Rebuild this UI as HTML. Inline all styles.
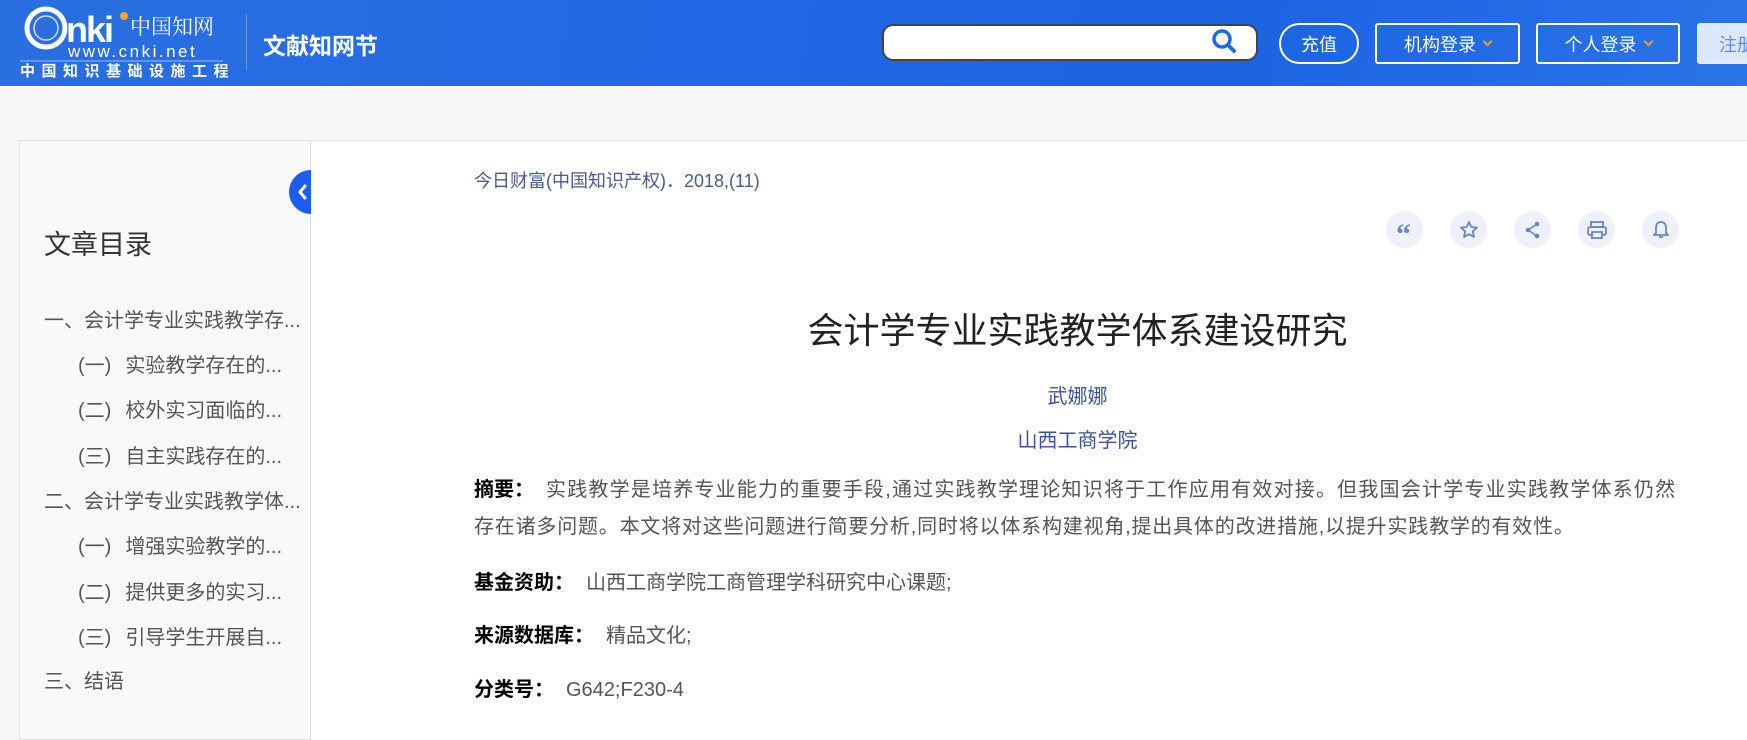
<!DOCTYPE html>
<html><head><meta charset="utf-8"><style>
*{margin:0;padding:0;box-sizing:border-box}
body{width:1747px;height:725px;overflow:hidden;background:#f7f7f7;font-family:"Liberation Sans","Noto Sans CJK SC",sans-serif;position:relative}
.hd{position:absolute;left:0;top:0;width:1747px;height:86px;background:linear-gradient(100deg,#2a6fe0 0%,#2368e4 40%,#1b63e2 70%,#2b73e8 100%)}
.abs{position:absolute}
.btn{position:absolute;top:23px;height:41px;border:2px solid #fff;color:#fff;font-size:18px;display:flex;align-items:center;justify-content:center;border-radius:3px}
.caret{display:inline-block;width:7px;height:7px;border-right:2px solid #f29a2e;border-bottom:2px solid #f29a2e;transform:rotate(45deg);margin-left:8px;margin-top:-5px}
.side{position:absolute;left:19px;top:140px;width:292px;height:600px;background:#f9f9f9;border:1px solid #e3e3e3}
.main{position:absolute;left:312px;top:140px;width:1440px;height:600px;background:#fff;border-top:1px solid #e3e3e3}
.toc{position:absolute;font-size:20px;color:#555;white-space:nowrap;line-height:26px}
.toc i{font-style:normal;margin-right:14px}
.ic{position:absolute;top:211px;width:37px;height:37px;border-radius:50%;background:#eef1f9;display:flex;align-items:center;justify-content:center}
.lab{position:absolute;left:474px;font-size:20px;color:#333;white-space:nowrap;line-height:26px}
.lab b{color:#000}
.lab span{color:#555;margin-left:12px}
.ls{letter-spacing:1.2px}
</style></head><body>
<div class="hd">
  <svg class="abs" style="left:18px;top:4px" width="215" height="74" viewBox="0 0 215 74">
    <circle cx="28" cy="24" r="19" fill="none" stroke="#fff" stroke-width="5"/>
    <circle cx="28" cy="24" r="12" fill="none" stroke="#cfe0ff" stroke-width="1.5"/>
    <text x="48" y="38" fill="#fff" font-family="Liberation Sans" font-weight="bold" font-size="36" letter-spacing="-2">nki</text>
    <circle cx="106" cy="12" r="4" fill="#f5a623"/>
    <text x="112" y="30" fill="#fff" font-family="Noto Serif CJK SC,serif" font-size="21">中国知网</text>
    <text x="50" y="53" fill="#fff" font-family="Liberation Sans" font-size="17" letter-spacing="2.5">www.cnki.net</text>
    <line x1="2" y1="57" x2="205" y2="57" stroke="#9cbcf0" stroke-width="1"/>
    <text x="2" y="72" fill="#fff" font-family="Noto Sans CJK SC,sans-serif" font-weight="bold" font-size="15" letter-spacing="6.5">中国知识基础设施工程</text>
  </svg>
  <div class="abs" style="left:246px;top:14px;width:1px;height:56px;background:#6f9ae8"></div>
  <div class="abs" style="left:263px;top:27px;color:#fff;font-size:23px;font-weight:bold">文献知网节</div>
  <div class="abs" style="left:882px;top:24px;width:376px;height:37px;background:#fff;border:2px solid #444;border-radius:11px"></div>
  <svg class="abs" style="left:1210px;top:27px" width="28" height="30" viewBox="0 0 28 30"><circle cx="12" cy="12" r="8" fill="none" stroke="#1d6ae5" stroke-width="3.5"/><line x1="18" y1="18" x2="24" y2="24" stroke="#1d6ae5" stroke-width="4" stroke-linecap="round"/></svg>
  <div class="btn" style="left:1279px;width:80px;border-radius:21px">充值</div>
  <div class="btn" style="left:1375px;width:145px">机构登录<i class="caret"></i></div>
  <div class="btn" style="left:1536px;width:144px">个人登录<i class="caret"></i></div>
  <div class="btn" style="left:1697px;width:120px;background:#dce7fb;border-color:#e6eefc;color:#5b8de8;justify-content:flex-start;padding-left:20px">注册</div>
</div>
<div class="side"></div>
<div class="main"></div>
<div class="abs" style="left:289px;top:170px;width:44px;height:44px;border-radius:50%;background:#1a5ff0;clip-path:inset(0 22px 0 0)"></div>
<svg class="abs" style="left:296px;top:183px" width="12" height="18" viewBox="0 0 12 18"><path d="M9 3 L4 9 L9 15" fill="none" stroke="#fff" stroke-width="3" stroke-linecap="round"/></svg>
<div class="abs" style="left:44px;top:223px;font-size:27px;color:#333">文章目录</div>
<div class="toc" style="left:44px;top:308px">一、会计学专业实践教学存...</div>
<div class="toc" style="left:78px;top:353px"><i>(一)</i>实验教学存在的...</div>
<div class="toc" style="left:78px;top:398px"><i>(二)</i>校外实习面临的...</div>
<div class="toc" style="left:78px;top:444px"><i>(三)</i>自主实践存在的...</div>
<div class="toc" style="left:44px;top:489px">二、会计学专业实践教学体...</div>
<div class="toc" style="left:78px;top:534px"><i>(一)</i>增强实验教学的...</div>
<div class="toc" style="left:78px;top:580px"><i>(二)</i>提供更多的实习...</div>
<div class="toc" style="left:78px;top:625px"><i>(三)</i>引导学生开展自...</div>
<div class="toc" style="left:44px;top:669px">三、结语</div>

<div class="abs" style="left:474px;top:167px;font-size:18px;color:#4a5a8a">今日财富(中国知识产权)．2018,(11)</div>
<div class="ic" style="left:1386px"><svg width="20" height="20" viewBox="0 0 20 20"><text x="1" y="24" font-family="Liberation Serif" font-weight="bold" font-size="30" fill="#6a85c8">“</text></svg></div>
<div class="ic" style="left:1450px"><svg width="20" height="20" viewBox="0 0 20 20"><path d="M10 2 L12.4 7 L18 7.6 L13.8 11.4 L15 17 L10 14.2 L5 17 L6.2 11.4 L2 7.6 L7.6 7 Z" fill="none" stroke="#6a85c8" stroke-width="1.8" stroke-linejoin="round"/></svg></div>
<div class="ic" style="left:1514px"><svg width="20" height="20" viewBox="0 0 20 20"><circle cx="14" cy="4" r="2.3" fill="#6a85c8"/><circle cx="5" cy="10" r="2.3" fill="#6a85c8"/><circle cx="14" cy="16" r="2.3" fill="#6a85c8"/><path d="M14 4 L5 10 L14 16" fill="none" stroke="#6a85c8" stroke-width="1.6"/></svg></div>
<div class="ic" style="left:1578px"><svg width="22" height="20" viewBox="0 0 22 20"><rect x="5" y="2" width="12" height="5" fill="none" stroke="#6a85c8" stroke-width="1.8"/><rect x="2" y="7" width="18" height="8" rx="2" fill="none" stroke="#6a85c8" stroke-width="1.8"/><rect x="6" y="12" width="10" height="6" fill="#eef1f9" stroke="#6a85c8" stroke-width="1.8"/></svg></div>
<div class="ic" style="left:1642px"><svg width="20" height="20" viewBox="0 0 20 20"><path d="M10 2 C6 2 5 5 5 8 L5 13 L3 15 L17 15 L15 13 L15 8 C15 5 14 2 10 2 Z" fill="none" stroke="#6a85c8" stroke-width="1.8" stroke-linejoin="round"/><path d="M8 17 L12 17" stroke="#6a85c8" stroke-width="1.8"/></svg></div>

<div class="abs" style="left:0;width:2155px;top:302px;text-align:center;font-size:36px;color:#222">会计学专业实践教学体系建设研究</div>
<div class="abs" style="left:0;width:2155px;top:380px;text-align:center;font-size:20px;color:#3d5296">武娜娜</div>
<div class="abs" style="left:0;width:2155px;top:424px;text-align:center;font-size:20px;color:#3d5296">山西工商学院</div>
<div class="lab" style="top:477px"><b>摘要：</b><span class="ls">实践教学是培养专业能力的重要手段,通过实践教学理论知识将于工作应用有效对接。但我国会计学专业实践教学体系仍然</span></div>
<div class="lab ls" style="top:514px;color:#555;letter-spacing:0.8px">存在诸多问题。本文将对这些问题进行简要分析,同时将以体系构建视角,提出具体的改进措施,以提升实践教学的有效性。</div>
<div class="lab" style="top:570px"><b>基金资助：</b><span>山西工商学院工商管理学科研究中心课题;</span></div>
<div class="lab" style="top:623px"><b>来源数据库：</b><span>精品文化;</span></div>
<div class="lab" style="top:677px"><b>分类号：</b><span>G642;F230-4</span></div>
</body></html>
